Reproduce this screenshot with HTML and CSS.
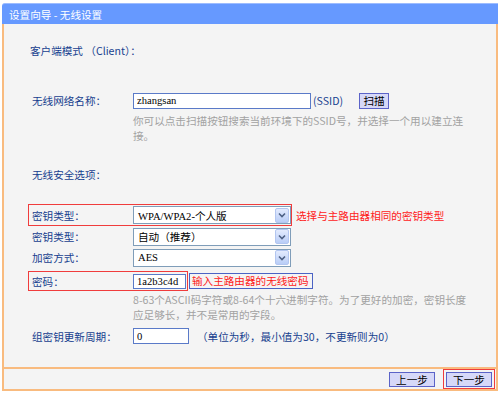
FILE: index.html
```html
<!DOCTYPE html>
<html lang="zh-CN">
  <head>
    <meta charset="UTF-8" />
    <title>设置向导 - 无线设置</title>
    <link rel="stylesheet" href="styles.css">
  </head>
  <body>
    <div class="wizard">
      <div class="wizard-title">设置向导 - 无线设置</div>
      <div class="panel">
        <p class="mode">客户端模式 （Client）：</p>

        <div class="row ssid-row">
          <span class="label">无线网络名称：</span>
          <input class="field ssid" type="text" value="zhangsan" />
          <span class="note">(SSID)</span>
          <button class="btn scan">扫描</button>
        </div>
        <p class="help">你可以点击扫描按钮搜索当前环境下的SSID号，并选择一个用以建立连<br />接。</p>

        <p class="section">无线安全选项：</p>

        <div class="row first-sel">
          <div class="mark mark-sel">
            <span class="label">密钥类型：</span>
            <div class="select"><span class="value">WPA/WPA2-个人版</span><span class="arrow"><svg width="8" height="6" viewBox="0 0 8 6"><path d="M1 1.5 L4 4.5 L7 1.5" fill="none" stroke="#4d6185" stroke-width="1.6"/></svg></span></div>
          </div>
          <span class="tip">选择与主路由器相同的密钥类型</span>
        </div>
        <div class="row sel-row">
          <span class="label">密钥类型：</span>
          <div class="select"><span class="value">自动（推荐）</span><span class="arrow"><svg width="8" height="6" viewBox="0 0 8 6"><path d="M1 1.5 L4 4.5 L7 1.5" fill="none" stroke="#4d6185" stroke-width="1.6"/></svg></span></div>
        </div>
        <div class="row sel-row">
          <span class="label">加密方式：</span>
          <div class="select"><span class="value">AES</span><span class="arrow"><svg width="8" height="6" viewBox="0 0 8 6"><path d="M1 1.5 L4 4.5 L7 1.5" fill="none" stroke="#4d6185" stroke-width="1.6"/></svg></span></div>
        </div>

        <div class="row pwd-row">
          <div class="mark mark-pwd">
            <span class="label">密码：</span>
            <input class="field pwd" type="text" value="1a2b3c4d" />
          </div>
          <span class="tip boxed">输入主路由器的无线密码</span>
        </div>
        <p class="help help-key">8-63个ASCII码字符或8-64个十六进制字符。为了更好的加密，密钥长度<br />应足够长，并不是常用的字段。</p>

        <div class="row group-row">
          <span class="label">组密钥更新周期：</span>
          <input class="field group" type="text" value="0" />
          <span class="note unit">（单位为秒，最小值为30，不更新则为0）</span>
        </div>
      </div>
      <div class="footer">
        <button class="btn step">上一步</button>
        <span class="next-mark"><button class="btn step">下一步</button></span>
      </div>
    </div>
  </body>
</html>
```

FILE: styles.css
```css
* {
  margin: 0;
  padding: 0;
  box-sizing: border-box;
}
body {
  background: #ffffff;
  font-family: "Noto Sans CJK SC", "DejaVu Sans", sans-serif;
  font-size: 10.6px;
}
.wizard {
  width: 496px;
  margin: 3px 0 0 2px;
}
.wizard-title {
  height: 21px;
  line-height: 21px;
  padding-left: 7px;
  background: #6699ff;
  border-top: 1px solid #9dbcff;
  border-radius: 3px 0 0 0;
  color: #ffffff;
}
.panel {
  height: 345px;
  background: #f4f4f4;
  border-left: 2px solid #f9bb7f;
  border-right: 2px solid #f9bb7f;
  border-bottom: 2px solid #f9bb7f;
  padding-top: 20px;
}
.mode,
.section {
  line-height: 14px;
  padding-left: 26px;
  color: #173f8f;
}
.section {
  margin-top: 25px;
  padding-left: 28px;
}
.row {
  display: flex;
  align-items: center;
  padding-left: 28px;
}
.label {
  width: 101px;
  flex-shrink: 0;
  color: #173f8f;
}
.field,
.select .value {
  font-family: "Liberation Serif", "Noto Sans CJK SC", serif;
  font-size: 10.6px;
  color: #000000;
}
.field {
  height: 16px;
  border: 1px solid #5a7ac8;
  background: #ffffff;
  padding: 0 3px;
  outline: none;
}
.ssid-row {
  margin-top: 34px;
  height: 17px;
}
.ssid {
  width: 178px;
}
.note {
  color: #173f8f;
  margin-left: 2px;
}
.btn {
  font-family: inherit;
  font-size: 10.6px;
  color: #000000;
  background: #d6d8f8;
  border: 1px solid #5b63c8;
  cursor: pointer;
}
.scan {
  width: 30px;
  height: 16px;
  line-height: 14px;
  margin-left: 16px;
}
.help {
  margin-top: 4px;
  padding-left: 129px;
  line-height: 15px;
  color: #a2a2a2;
  white-space: nowrap;
}
.first-sel {
  margin-top: 22px;
}
.mark {
  display: flex;
  align-items: center;
  margin-left: -4px;
  padding-left: 3px;
  border: 1px solid #f03c3c;
}
.mark-sel {
  height: 22px;
}
.mark-pwd {
  height: 20px;
  padding-right: 1px;
}
.select {
  display: flex;
  align-items: center;
  justify-content: space-between;
  width: 158px;
  height: 18px;
  padding: 0 1px 0 4px;
  background: #ffffff;
  border: 1px solid #7f9db9;
}
.arrow {
  display: flex;
  align-items: center;
  justify-content: center;
  width: 14px;
  height: 15px;
  background: linear-gradient(#e3ebfe, #b9cdf7);
  border: 1px solid #b3c6f0;
  border-radius: 2px;
}
.sel-row {
  height: 21px;
}
.tip {
  margin-left: 4px;
  color: #ff1a1a;
}
.tip.boxed {
  margin-left: 1px;
  height: 16px;
  line-height: 14px;
  padding: 0 3px 0 2px;
  border: 1px solid #4b63c4;
}
.pwd-row {
  margin-top: 3px;
}
.pwd {
  width: 53px;
  height: 15px;
}
.help-key {
  margin-top: 1px;
}
.group-row {
  margin-top: 5px;
  height: 18px;
}
.group {
  width: 56px;
}
.unit {
  margin-left: 8px;
}
.footer {
  height: 22px;
  background: #f4f4f4;
  border-left: 2px solid #f9bb7f;
  border-right: 2px solid #f9bb7f;
  border-bottom: 2px solid #f9bb7f;
  display: flex;
  align-items: center;
  justify-content: flex-end;
  padding-right: 1px;
}
.step {
  width: 46px;
  height: 15px;
  line-height: 13px;
}
.next-mark {
  display: flex;
  align-items: center;
  justify-content: center;
  width: 52px;
  height: 20px;
  margin-left: 8px;
  border: 1px solid #f03c3c;
}
```
